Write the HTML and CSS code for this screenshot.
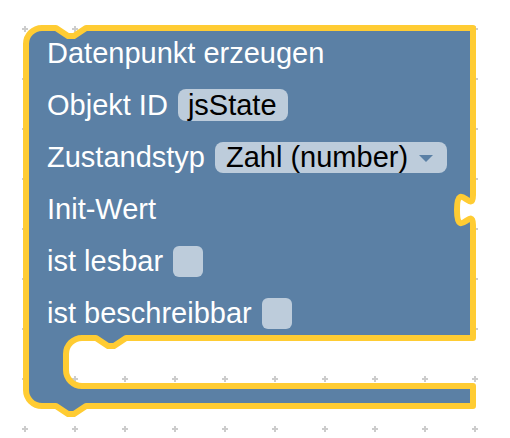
FILE: index.html
```html
<!DOCTYPE html>
<html>
<head>
<meta charset="utf-8">
<link rel="stylesheet" href="styles.css">
</head>
<body>
<div class="workspace">
  <svg class="canvas" width="510" height="438" viewBox="0 0 510 438">
    <defs>
      <pattern id="grid" x="0" y="4" width="50" height="50" patternUnits="userSpaceOnUse">
        <rect x="22" y="24" width="6" height="2" fill="#cccccc"/>
        <rect x="24" y="22" width="2" height="6" fill="#cccccc"/>
      </pattern>
    </defs>
    <rect x="0" y="0" width="510" height="438" fill="url(#grid)"/>
    <path class="block-path" d="M 26,44 A 16,16 0 0 1 42,28 H 56 l 12,8 h 6 l 12,-8 H 473 V 195 c 0,20 -16,-16 -16,15 s 16,-5 16,15 V 338 H 126 l -12,8 h -6 l -12,-8 H 82 A 16,16 0 0 0 66,354 V 370 A 16,16 0 0 0 82,386 H 473 V 406 H 86 l -12,8 h -6 l -12,-8 H 42 A 16,16 0 0 1 26,390 Z"/>
  </svg>
  <div class="block">
    <div class="row"><span class="label">Datenpunkt erzeugen</span></div>
    <div class="row"><span class="label">Objekt ID</span><span class="field">jsState</span></div>
    <div class="row"><span class="label">Zustandstyp</span><span class="field dropdown">Zahl (number)<span class="arrow"></span></span></div>
    <div class="row"><span class="label">Init-Wert</span></div>
    <div class="row"><span class="label">ist lesbar</span><span class="checkbox"></span></div>
    <div class="row"><span class="label">ist beschreibbar</span><span class="checkbox"></span></div>
  </div>
</div>
</body>
</html>
```

FILE: styles.css
```css
html, body {
  margin: 0;
  padding: 0;
  background: #ffffff;
}

.workspace {
  position: relative;
  width: 510px;
  height: 438px;
  overflow: hidden;
  font-family: "Liberation Sans", Arial, sans-serif;
  font-size: 29px;
}

.canvas {
  position: absolute;
  left: 0;
  top: 0;
  display: block;
}

.block-path {
  fill: #5b80a5;
  stroke: #ffcc33;
  stroke-width: 6;
  stroke-linejoin: round;
}

.block {
  position: absolute;
  left: 47px;
  top: 27px;
  display: flex;
  flex-direction: column;
}

.row {
  height: 52px;
  display: flex;
  align-items: center;
  gap: 10px;
  white-space: nowrap;
}

.label {
  color: #ffffff;
  line-height: 32px;
}

.field {
  display: flex;
  align-items: center;
  height: 32px;
  line-height: 32px;
  padding: 0 11px 0 10px;
  border-radius: 8px;
  background: #bdccdb;
  color: #000000;
}

.dropdown {
  gap: 11px;
  padding: 0 14px 0 11px;
  height: 31px;
}

.arrow {
  width: 0;
  height: 0;
  border-left: 7.5px solid transparent;
  border-right: 7.5px solid transparent;
  border-top: 7px solid #5b80a5;
  margin-top: 2px;
}

.checkbox {
  width: 30px;
  height: 31px;
  border-radius: 6px;
  background: #bdccdb;
}
```
